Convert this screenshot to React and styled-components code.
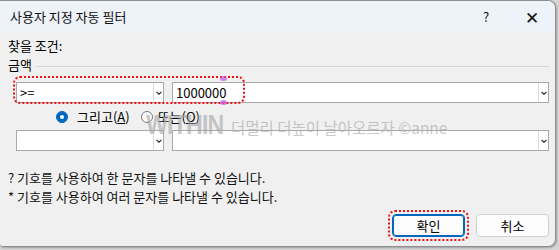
import React from 'react';
import styled, { createGlobalStyle } from 'styled-components';

const GlobalStyle = createGlobalStyle`
  html, body {
    margin: 0;
    padding: 0;
    width: 559px;
    height: 250px;
    overflow: hidden;
    background: #d6d6d6;
    font-family: 'Noto Sans CJK KR', 'Noto Sans', sans-serif;
  }
`;

const Dialog = styled.div`
  position: relative;
  width: 556px;
  height: 247px;
  box-sizing: border-box;
  border: 1px solid #8f8f8f;
  border-left: none;
  border-radius: 0 8px 8px 3px;
  background: #f0f0f0;
  overflow: hidden;
  display: flex;
  flex-direction: column;
  box-shadow: 1px 1px 2px rgba(0, 0, 0, 0.25);
`;

const TitleBar = styled.div`
  height: 31px;
  flex: none;
  background: #eef2f9;
  display: flex;
  align-items: center;
  padding: 0 0 0 10px;
  font-size: 13px;
  color: #111;
`;

const Title = styled.div`
  flex: 1;
  padding-bottom: 1px;
`;

const TitleButton = styled.div`
  width: 46px;
  height: 31px;
  display: flex;
  align-items: center;
  justify-content: center;
  font-size: ${(p) => p.$size || 13}px;
  color: #111;
`;

const Body = styled.div`
  flex: 1;
  padding: 6px 6px 0 8px;
  display: flex;
  flex-direction: column;
  font-size: 13px;
  color: #000;
`;

const Label = styled.div`
  height: 16px;
  line-height: 16px;
`;

const GroupHead = styled.div`
  margin-top: 3px;
  height: 16px;
  display: flex;
  align-items: center;
  gap: 4px;
  line-height: 16px;
`;

const GroupLine = styled.div`
  flex: 1;
  height: 1px;
  margin-top: 2px;
  background: #d6d6d6;
`;

const ComboRow = styled.div`
  position: relative;
  margin: ${(p) => p.$top || 0}px 0 0 8px;
  display: flex;
  gap: 8px;
`;

const Combo = styled.div`
  width: ${(p) => (p.$wide ? 'auto' : '148px')};
  flex: ${(p) => (p.$wide ? 1 : 'none')};
  height: 21px;
  box-sizing: border-box;
  border: 1px solid #a9a9a9;
  background: #fff;
  display: flex;
  align-items: center;
`;

const ComboText = styled.div`
  flex: 1;
  padding-left: 3px;
  font-size: 13px;
  line-height: 19px;
  color: #000;
`;

const ComboArrow = styled.div`
  width: 9px;
  height: 100%;
  border-left: 1px solid #dcdcdc;
  display: flex;
  align-items: center;
  justify-content: center;
`;

const FocusRing = styled.div`
  position: absolute;
  left: -3px;
  top: -6px;
  width: 232px;
  height: 28px;
  box-sizing: border-box;
  border: 2px dotted #ee1111;
  border-radius: 7px;
  pointer-events: none;
`;

const Handle = styled.div`
  position: absolute;
  left: 205px;
  top: ${(p) => (p.$bottom ? '-2px' : 'auto')};
  bottom: ${(p) => (p.$bottom ? 'auto' : '-3px')};
  width: 7px;
  height: 5px;
  border-radius: 50%;
  background: rgba(200, 90, 230, 0.75);
`;

const RadioRow = styled.div`
  height: 27px;
  display: flex;
  align-items: center;
  padding-left: 48px;
`;

const RadioItem = styled.div`
  display: flex;
  align-items: center;
  gap: ${(p) => (p.$on ? 9 : 5)}px;
  margin-right: ${(p) => p.$gap || 0}px;
`;

const RadioDot = styled.div`
  width: 12px;
  height: 12px;
  box-sizing: border-box;
  border-radius: 50%;
  background: ${(p) => (p.$on ? '#0067c0' : '#fdfdfd')};
  border: 1px solid ${(p) => (p.$on ? '#0067c0' : '#7a7a7a')};
  display: flex;
  align-items: center;
  justify-content: center;

  &::after {
    content: '';
    display: ${(p) => (p.$on ? 'block' : 'none')};
    width: 4px;
    height: 4px;
    border-radius: 50%;
    background: #fff;
  }
`;

const Watermark = styled.div`
  position: absolute;
  left: 146px;
  top: 109px;
  display: flex;
  align-items: baseline;
  gap: 4px;
  color: rgba(165, 165, 165, 0.6);
  pointer-events: none;
  white-space: nowrap;
`;

const WatermarkLogo = styled.span`
  font-family: 'Liberation Sans', sans-serif;
  font-weight: bold;
  font-size: 27px;
  letter-spacing: -1px;
  transform: scaleX(0.86);
  transform-origin: left;
  margin-right: -9px;
`;

const WatermarkText = styled.span`
  font-size: 15.5px;
`;

const HelpText = styled.div`
  margin-top: 17px;
  line-height: 19px;
  color: #111;
`;

const ButtonRow = styled.div`
  margin-top: 8px;
  display: flex;
  justify-content: flex-end;
  gap: 11px;
`;

const Button = styled.div`
  position: relative;
  width: 73px;
  height: 23px;
  box-sizing: border-box;
  border: 1px solid ${(p) => (p.$primary ? '#0067c0' : '#cfcfcf')};
  box-shadow: ${(p) => (p.$primary ? 'inset 0 0 0 1px #0067c0' : 'none')};
  border-radius: 4px;
  background: #fdfdfd;
  display: flex;
  align-items: center;
  justify-content: center;
  font-size: 13px;
  color: #000;

  &::after {
    content: '';
    display: ${(p) => (p.$primary ? 'block' : 'none')};
    position: absolute;
    left: -5px;
    top: -5px;
    right: -5px;
    bottom: -5px;
    border: 2px dotted #ee1111;
    border-radius: 7px;
  }
`;

function Chevron() {
  return (
    <svg width="6" height="4" viewBox="0 0 6 4">
      <polyline points="0.5,0.8 3,3.2 5.5,0.8" fill="none" stroke="#222" strokeWidth="1.1" />
    </svg>
  );
}

function ComboBox({ value, wide }) {
  return (
    <Combo $wide={wide}>
      <ComboText>{value}</ComboText>
      <ComboArrow>
        <Chevron />
      </ComboArrow>
    </Combo>
  );
}

export default function App() {
  return (
    <>
      <GlobalStyle />
      <Dialog>
        <TitleBar>
          <Title>사용자 지정 자동 필터</Title>
          <TitleButton $size={13}>?</TitleButton>
          <TitleButton $size={17}>✕</TitleButton>
        </TitleBar>
        <Body>
          <Label>찾을 조건:</Label>
          <GroupHead>
            <span>금액</span>
            <GroupLine />
          </GroupHead>
          <ComboRow $top={9}>
            <ComboBox value="&gt;=" />
            <ComboBox value="1000000" wide />
            <FocusRing>
              <Handle $bottom />
              <Handle />
            </FocusRing>
          </ComboRow>
          <RadioRow>
            <RadioItem $on $gap={11}>
              <RadioDot $on />
              <span>
                그리고(<u>A</u>)
              </span>
            </RadioItem>
            <RadioItem>
              <RadioDot />
              <span>
                또는(<u>O</u>)
              </span>
            </RadioItem>
          </RadioRow>
          <ComboRow>
            <ComboBox value="" />
            <ComboBox value="" wide />
          </ComboRow>
          <HelpText>
            ? 기호를 사용하여 한 문자를 나타낼 수 있습니다.
            <br />* 기호를 사용하여 여러 문자를 나타낼 수 있습니다.
          </HelpText>
          <ButtonRow>
            <Button $primary>확인</Button>
            <Button>취소</Button>
          </ButtonRow>
        </Body>
        <Watermark>
          <WatermarkLogo>WITHIN</WatermarkLogo>
          <WatermarkText>더멀리 더높이 날아오르자 ©anne</WatermarkText>
        </Watermark>
      </Dialog>
    </>
  );
}
